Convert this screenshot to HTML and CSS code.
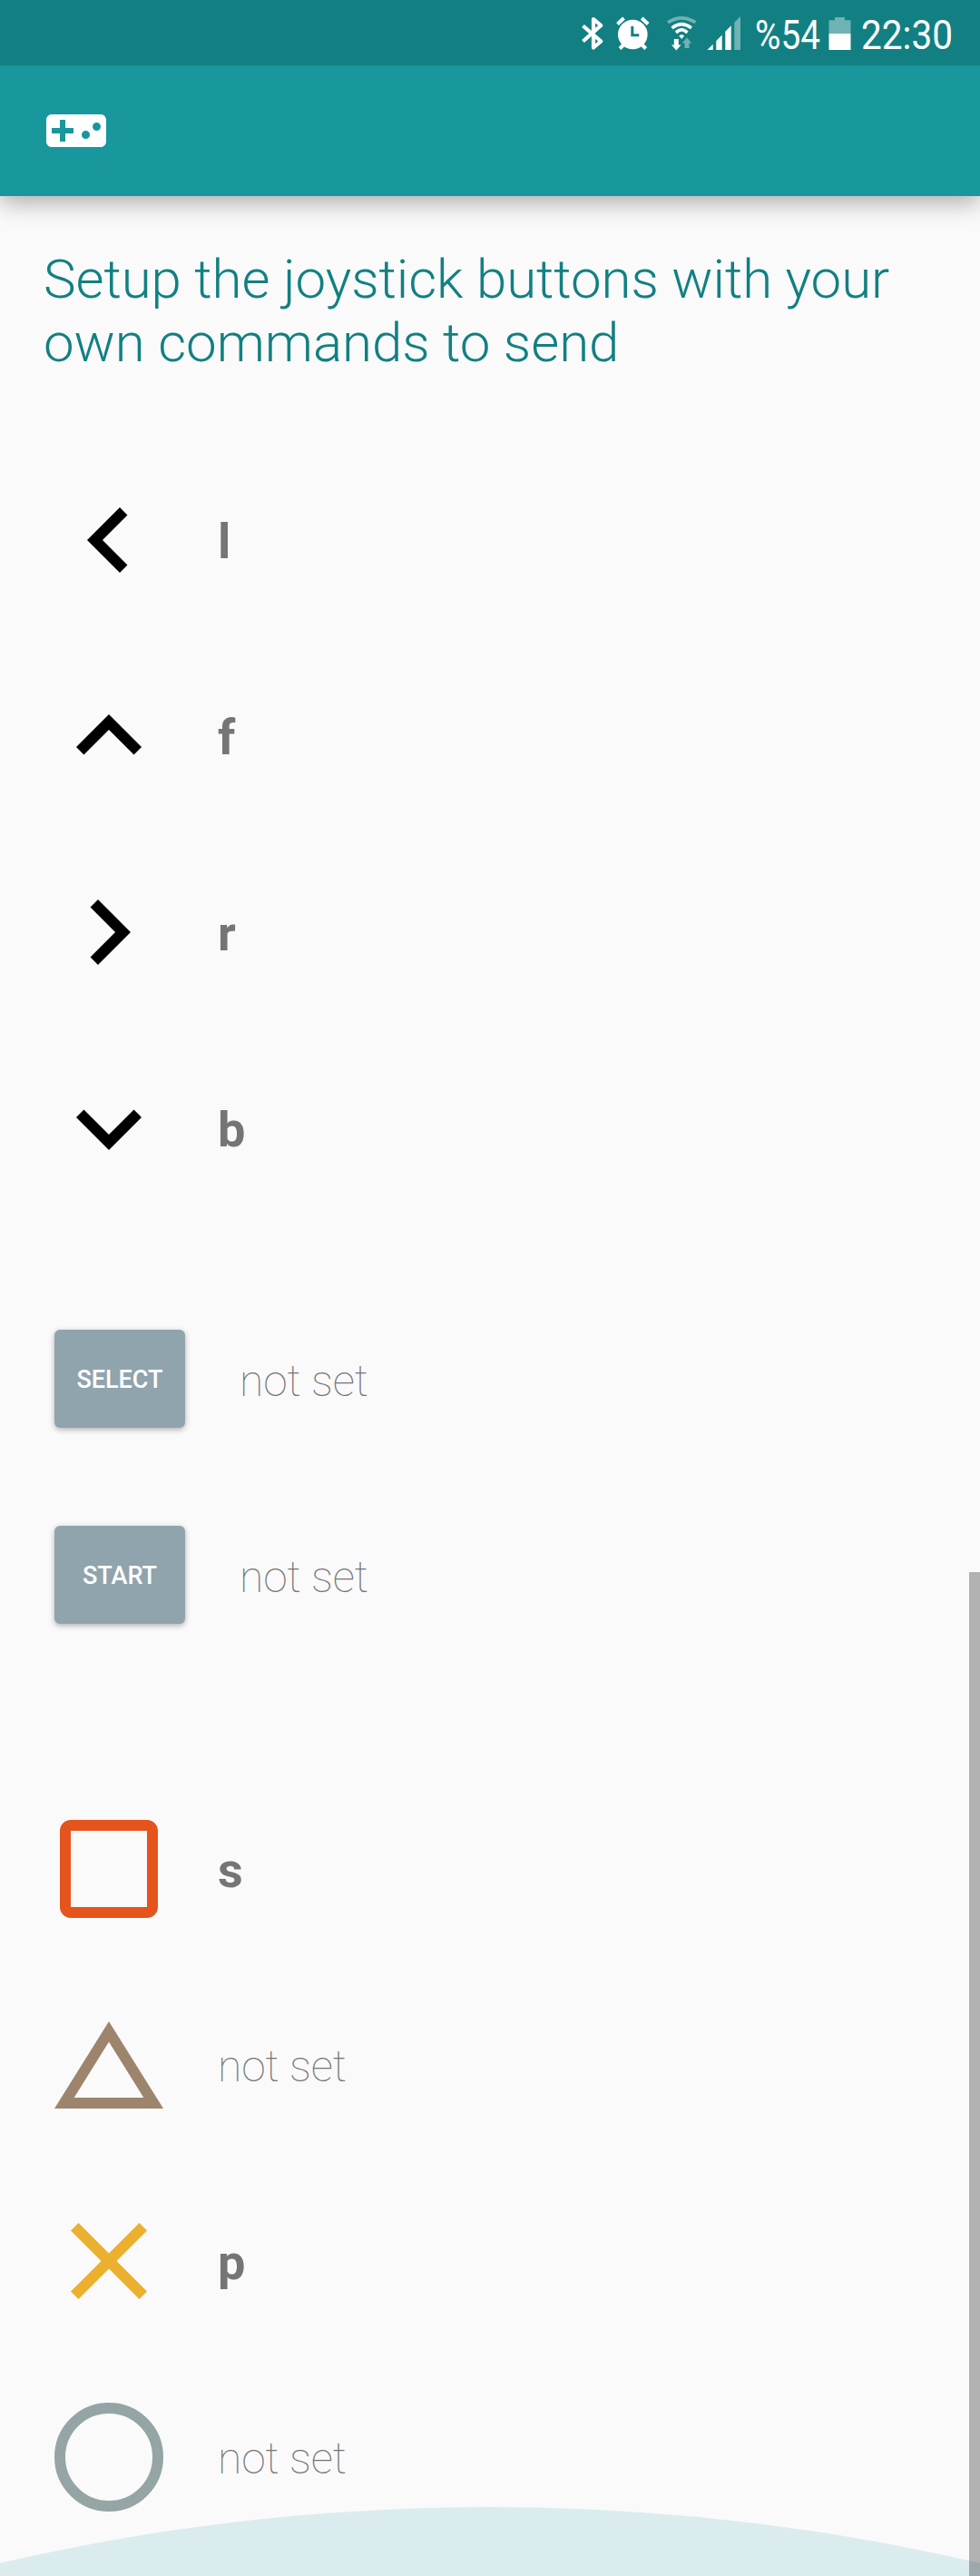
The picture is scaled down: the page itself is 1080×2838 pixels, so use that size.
FILE: index.html
```html
<!DOCTYPE html>
<html lang="en">
<head>
<meta charset="utf-8">
<title>Joystick setup</title>
<link rel="stylesheet" href="styles.css">
</head>
<body>
<div class="screen">
  <header class="header">
    <div class="status-bar">
      <svg class="status-icons" viewBox="0 0 205 72" width="205" height="72">
        <path d="M22.500 28.500 42.300 45.500 34 52.500V21L42.300 28 22.500 45.500" fill="none" stroke="#fff" stroke-width="4.200" stroke-linejoin="round"/>
        <circle cx="77.300" cy="38" r="16.300" fill="#fff"/>
        <path d="M60.500 26.500 67.500 20M94.200 26.500 87.200 20M63 53.500 67.500 49M91.700 53.500 87.200 49" stroke="#fff" stroke-width="4"/>
        <path d="M76.800 29v9.800h7.500" fill="none" stroke="#128082" stroke-width="3"/>
        <path d="M116 24.800Q131.200 14.800 146.400 24.800" fill="none" stroke="#70b3b4" stroke-width="3.600"/>
        <path d="M120.500 30.800Q131.200 22.500 141.900 30.800M125 36Q131.200 29.600 137.400 36" fill="none" stroke="#fff" stroke-width="3.500"/>
        <path d="M128.300 39.500Q131.200 37 134.100 39.500L131.200 43z" fill="#fff"/>
        <path d="M122.800 43h5v6.500h2.800L125.300 55.500 120 49.500h2.800z" fill="#fff"/>
        <path d="M134.500 53h5v-5.500h2.800L137 41.500 131.700 47.500h2.800z" fill="#70b3b4"/>
        <path d="M159.500 55 165.700 48.700V55zM169.300 55V44.900L175.700 38.500V55zM179.300 55V34.700L185.700 28.300V55z" fill="#fff"/>
        <path d="M189.300 55V24.700L196 18V55z" fill="#70b3b4"/>
      </svg>
      <svg class="status-battery-text" viewBox="0 0 85 72" width="85" height="72">
        <text class="status-text" x="7" y="54" textLength="72" lengthAdjust="spacingAndGlyphs">%54</text>
      </svg>
      <svg class="status-battery" viewBox="5 0 35 72" width="35" height="72">
        <path d="M8.500 37V22.300H15V19h11v3.300h6.500V37z" fill="#70b3b4"/>
        <path d="M8.500 37h24v18h-24z" fill="#fff"/>
      </svg>
      <svg class="status-time" viewBox="0 0 135 72" width="135" height="72">
        <text class="status-text" x="4" y="54" textLength="101" lengthAdjust="spacingAndGlyphs">22:30</text>
      </svg>
    </div>
    <div class="app-bar">
      <svg viewBox="0 0 24 24" width="72" height="72" fill="#fff"><path d="M21 6H3c-1.100 0-2 .9-2 2v8c0 1.100.9 2 2 2h18c1.100 0 2-.9 2-2V8c0-1.100-.9-2-2-2zm-10 7H8v3H6v-3H3v-2h3V8h2v3h3v2zm4.500 2c-.83 0-1.500-.67-1.500-1.500s.67-1.500 1.500-1.500 1.500.67 1.500 1.500-.67 1.500-1.500 1.500zm4-3c-.83 0-1.500-.67-1.500-1.500S18.670 9 19.500 9s1.500.67 1.500 1.500-.67 1.500-1.500 1.500z"/></svg>
    </div>
  </header>

  <main class="content">
    <h1 class="title">Setup the joystick buttons with your own commands to send</h1>

    <section class="group">
      <div class="row">
        <svg class="icon" viewBox="0 0 24 24"><path d="M15.410 16.590 10.830 12l4.580-4.590L14 6l-6 6 6 6z"/></svg>
        <span class="command">l</span>
      </div>
      <div class="row">
        <svg class="icon" viewBox="0 0 24 24"><path d="M7.410 15.410 12 10.830l4.590 4.580L18 14l-6-6-6 6z"/></svg>
        <span class="command">f</span>
      </div>
      <div class="row">
        <svg class="icon" viewBox="0 0 24 24"><path d="M8.590 16.590 13.170 12 8.590 7.410 10 6l6 6-6 6z"/></svg>
        <span class="command">r</span>
      </div>
      <div class="row">
        <svg class="icon" viewBox="0 0 24 24"><path d="M7.410 8.590 12 13.170l4.590-4.580L18 10l-6 6-6-6z"/></svg>
        <span class="command">b</span>
      </div>
    </section>

    <section class="group group-buttons">
      <div class="row">
        <button class="pad-button" type="button">SELECT</button>
        <span class="command command-unset">not set</span>
      </div>
      <div class="row">
        <button class="pad-button" type="button">START</button>
        <span class="command command-unset">not set</span>
      </div>
    </section>

    <section class="group group-shapes">
      <div class="row">
        <svg class="icon icon-square" viewBox="0 0 24 24"><path d="M19 3H5c-1.100 0-2 .9-2 2v14c0 1.100.9 2 2 2h14c1.100 0 2-.9 2-2V5c0-1.100-.9-2-2-2zm0 16H5V5h14z"/></svg>
        <span class="command">s</span>
      </div>
      <div class="row">
        <svg class="icon icon-triangle" viewBox="0 0 24 24"><path d="M12 7.770 18.390 18H5.610zM12 4 2 20h20z"/></svg>
        <span class="command command-unset">not set</span>
      </div>
      <div class="row">
        <svg class="icon icon-cross" viewBox="0 0 24 24"><path d="M19 6.410 17.590 5 12 10.590 6.410 5 5 6.410 10.590 12 5 17.590 6.410 19 12 13.410 17.590 19 19 17.590 13.410 12z"/></svg>
        <span class="command">p</span>
      </div>
      <div class="row">
        <svg class="icon icon-circle" viewBox="0 0 24 24"><circle cx="12" cy="12" r="9" stroke-width="2"/></svg>
        <span class="command command-unset">not set</span>
      </div>
    </section>
  </main>

  <svg class="wave" viewBox="0 0 1080 77" width="1080" height="77"><circle cx="540" cy="2391" r="2390" fill="#dbecee"/></svg>
  <div class="scrollbar"></div>
</div>
</body>
</html>
```
FILE: styles.css
```css
body {
  margin: 0;
  background: #fafafa;
  font-family: Roboto, "Liberation Sans", sans-serif;
}

.screen {
  position: relative;
  height: 2838px;
  overflow: hidden;
}

.header {
  box-shadow: 0 8px 24px rgba(0, 0, 0, 0.3);
}

.status-bar {
  display: flex;
  justify-content: flex-end;
  height: 72px;
  background: #128082;
}

.status-text {
  fill: #fff;
  font-size: 45px;
}

.app-bar {
  display: flex;
  align-items: center;
  height: 144px;
  padding-left: 48px;
  background: #18979c;
}

.content {
  padding: 57px 48px 0;
}

.title {
  margin: 0;
  color: #128082;
  font-size: 60px;
  font-weight: 300;
  letter-spacing: -0.070px;
  line-height: 70px;
}

.group {
  margin-top: 73.500px;
}

.group-buttons {
  margin-top: 60.500px;
}

.group-shapes {
  margin-top: 107.500px;
}

.row {
  display: flex;
  align-items: center;
  gap: 48px;
  height: 216px;
}

.icon {
  width: 144px;
  height: 144px;
}

.icon-square {
  fill: #e5541c;
}

.icon-triangle {
  fill: #9d846d;
}

.icon-cross {
  fill: #ecb02f;
}

.icon-circle {
  fill: none;
  stroke: #95a5a5;
}

.command {
  padding-top: 4px;
  color: #757575;
  font-size: 54px;
  font-weight: 700;
}

.command-unset {
  font-size: 48px;
  font-weight: 100;
  letter-spacing: -0.120px;
}

.pad-button {
  width: 144px;
  height: 108px;
  margin: 0 12px;
  padding: 2px 0 0;
  border: 0;
  border-radius: 6px;
  background: #90a4ad;
  box-shadow: 0 2px 6px rgba(0, 0, 0, 0.3);
  color: #fff;
  font-family: inherit;
  font-size: 27px;
  font-weight: 500;
}

/* Decorative wave over the foot of the list */
.wave {
  position: absolute;
  bottom: 0;
  left: 0;
}

.scrollbar {
  position: absolute;
  top: 1731.500px;
  right: 0;
  bottom: 0;
  width: 12px;
  background: rgba(0, 0, 0, 0.285);
}
```
